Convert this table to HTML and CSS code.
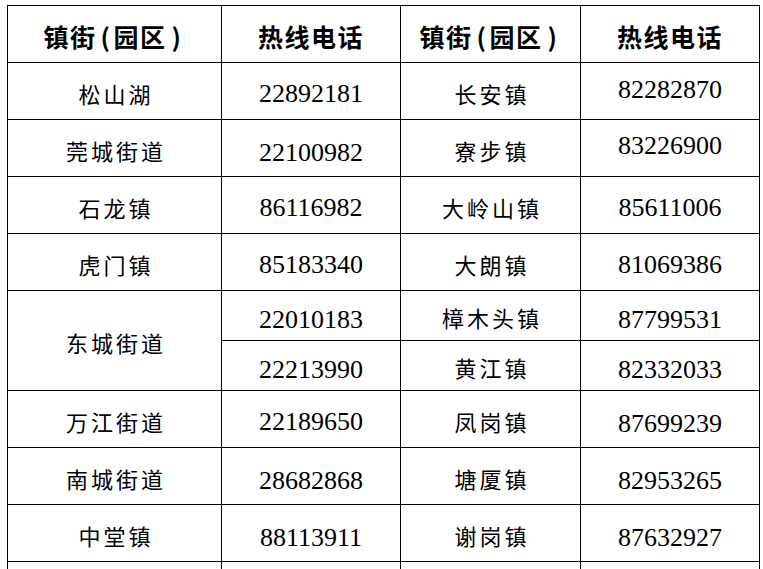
FILE: index.html
```html
<!DOCTYPE html>
<html lang="zh-CN">
<head>
<meta charset="utf-8">
<title>镇街热线电话</title>
<link rel="stylesheet" href="styles.css">
</head>
<body>
<table class="hotline">
  <colgroup>
    <col class="c-town">
    <col class="c-num">
    <col class="c-town2">
    <col class="c-num">
  </colgroup>
  <thead>
    <tr class="head">
      <th class="hcell">镇街<span class="paren paren-l">(</span>园区<span class="paren paren-r">)</span></th>
      <th class="hcell">热线电话</th>
      <th class="hcell">镇街<span class="paren paren-l">(</span>园区<span class="paren paren-r">)</span></th>
      <th class="hcell">热线电话</th>
    </tr>
  </thead>
  <tbody>
    <tr class="row">
      <td class="town">松山湖</td><td class="num num-mid">22892181</td>
      <td class="town">长安镇</td><td class="num num-up">82282870</td>
    </tr>
    <tr class="row">
      <td class="town">莞城街道</td><td class="num num-down">22100982</td>
      <td class="town">寮步镇</td><td class="num num-up2">83226900</td>
    </tr>
    <tr class="row">
      <td class="town">石龙镇</td><td class="num num-mid">86116982</td>
      <td class="town">大岭山镇</td><td class="num num-mid">85611006</td>
    </tr>
    <tr class="row">
      <td class="town">虎门镇</td><td class="num num-mid">85183340</td>
      <td class="town">大朗镇</td><td class="num num-mid">81069386</td>
    </tr>
    <tr class="half">
      <td class="town" rowspan="2">东城街道</td><td class="num">22010183</td>
      <td class="town">樟木头镇</td><td class="num">87799531</td>
    </tr>
    <tr class="half">
      <td class="num">22213990</td>
      <td class="town">黄江镇</td><td class="num">82332033</td>
    </tr>
    <tr class="row">
      <td class="town">万江街道</td><td class="num num-mid">22189650</td>
      <td class="town">凤岗镇</td><td class="num">87699239</td>
    </tr>
    <tr class="row">
      <td class="town">南城街道</td><td class="num">28682868</td>
      <td class="town">塘厦镇</td><td class="num">82953265</td>
    </tr>
    <tr class="row">
      <td class="town">中堂镇</td><td class="num">88113911</td>
      <td class="town">谢岗镇</td><td class="num">87632927</td>
    </tr>
    <tr class="row">
      <td class="town"></td><td class="num"></td>
      <td class="town"></td><td class="num"></td>
    </tr>
  </tbody>
</table>
</body>
</html>
```

FILE: styles.css
```css
html, body {
  margin: 0;
  padding: 0;
  background: #ffffff;
}

body {
  padding: 5px 0 0 7px;
  overflow: hidden;
}

.hotline {
  border-collapse: collapse;
  table-layout: fixed;
  width: 752px;
  color: #000;
}

.c-town { width: 214px; }
.c-num { width: 179px; }
.c-town2 { width: 180px; }

.hcell,
.town,
.num {
  border: 1px solid #000;
  padding: 0;
  text-align: center;
  vertical-align: middle;
  overflow: hidden;
  white-space: nowrap;
}

.head {
  height: 57px;
}

.hcell {
  font-family: "Noto Sans CJK SC", sans-serif;
  font-weight: 700;
  font-size: 25px;
  letter-spacing: 1.5px;
  padding-top: 3px;
}

.paren {
  display: inline-block;
}

.paren-l {
  margin: 0 2px 0 4px;
}

.paren-r {
  margin: 0 3px 0 5px;
}

.row {
  height: 57px;
}

.half {
  height: 50px;
}

.town {
  font-family: "Noto Sans CJK SC", sans-serif;
  font-weight: 400;
  font-size: 22px;
  letter-spacing: 3px;
  text-indent: 3px;
  padding-top: 3px;
}

.num {
  font-family: "Liberation Serif", "Times New Roman", serif;
  font-size: 26px;
  padding-top: 9px;
}

.num.num-mid {
  padding-top: 5px;
}

.num.num-up {
  padding-top: 0;
  padding-bottom: 3px;
}

.num.num-up2 {
  padding-top: 0;
  padding-bottom: 5px;
}

.num.num-down {
  padding-top: 9px;
}
```
